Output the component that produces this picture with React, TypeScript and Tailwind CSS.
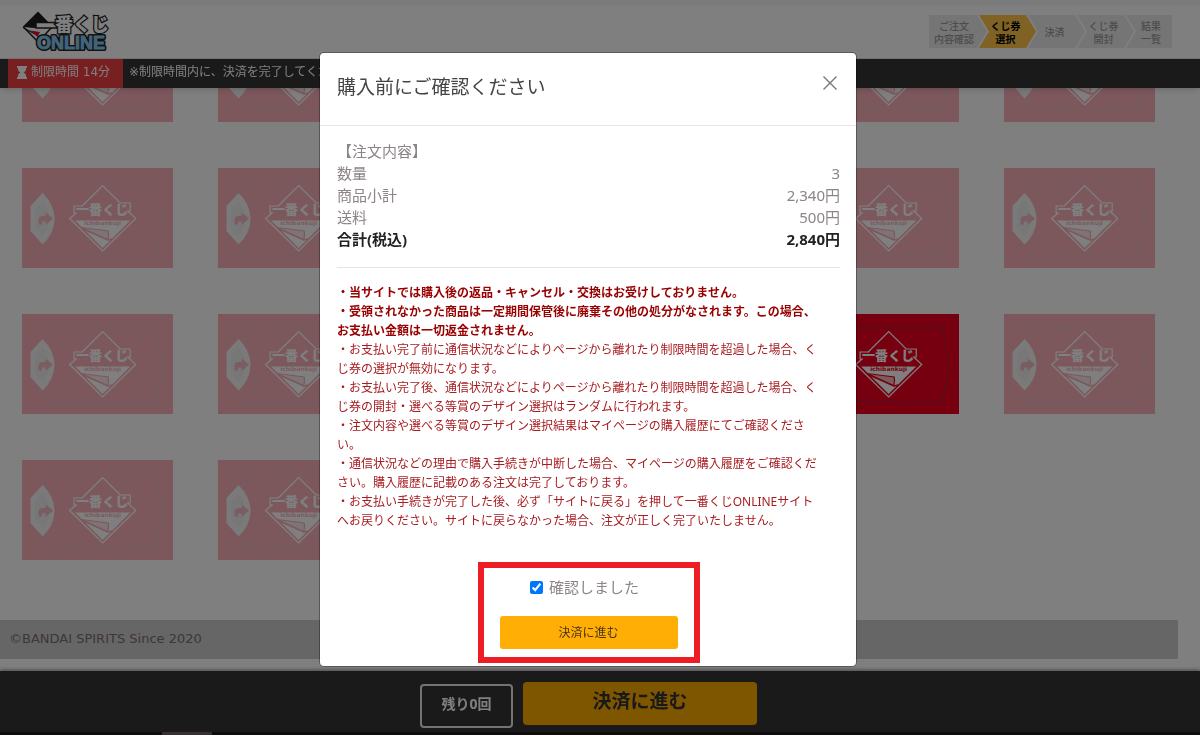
import { useState } from "react";

const UI = "font-['Noto_Sans','Noto_Sans_CJK_JP',sans-serif]";
const WIDE = "font-['DejaVu_Sans','Noto_Sans_CJK_JP',sans-serif]";

const steps = [
  { lines: ["ご注文", "内容確認"], width: "w-[58px]", active: false },
  { lines: ["くじ券", "選択"], width: "w-[57px] -ml-2", active: true },
  { lines: ["決済"], width: "w-[57px] -ml-2", active: false },
  { lines: ["くじ券", "開封"], width: "w-[57px] -ml-2", active: false },
  { lines: ["結果", "一覧"], width: "w-[46px] -ml-2", active: false },
];

const clips = {
  first: "[clip-path:polygon(0_0,calc(100%_-_10px)_0,100%_50%,calc(100%_-_10px)_100%,0_100%)]",
  middle: "[clip-path:polygon(0_0,calc(100%_-_10px)_0,100%_50%,calc(100%_-_10px)_100%,0_100%,10px_50%)]",
  last: "[clip-path:polygon(0_0,100%_0,100%_100%,0_100%,10px_50%)]",
};

const order = [
  ["数量", "3"],
  ["商品小計", "2,340円"],
  ["送料", "500円"],
];

const warnings = [
  ["・当サイトでは購入後の返品・キャンセル・交換はお受けしておりません。"],
  [
    "・受領されなかった商品は一定期間保管後に廃棄その他の処分がなされます。この場合、",
    "お支払い金額は一切返金されません。",
  ],
];

const notes = [
  [
    "・お支払い完了前に通信状況などによりページから離れたり制限時間を超過した場合、く",
    "じ券の選択が無効になります。",
  ],
  [
    "・お支払い完了後、通信状況などによりページから離れたり制限時間を超過した場合、く",
    "じ券の開封・選べる等賞のデザイン選択はランダムに行われます。",
  ],
  ["・注文内容や選べる等賞のデザイン選択結果はマイページの購入履歴にてご確認くださ", "い。"],
  [
    "・通信状況などの理由で購入手続きが中断した場合、マイページの購入履歴をご確認くだ",
    "さい。購入履歴に記載のある注文は完了しております。",
  ],
  [
    "・お支払い手続きが完了した後、必ず「サイトに戻る」を押して一番くじONLINEサイト",
    "へお戻りください。サイトに戻らなかった場合、注文が正しく完了いたしません。",
  ],
];

const TICKETS = 20;

function Lines({ lines }: { lines: string[] }) {
  return (
    <p>
      {lines.map((line) => (
        <span key={line} className="block whitespace-nowrap">
          {line}
        </span>
      ))}
    </p>
  );
}

function Logo() {
  return (
    <svg viewBox="0 0 90 42" className="h-[42px] w-[90px]" role="img" aria-label="一番くじONLINE">
      <path d="M1.500 16 16 1.500 30 16 16 31Z" fill="#fff" stroke="#222" strokeWidth="1.500" strokeLinejoin="round" />
      <path d="M1.500 16 16 1.500 30 15.500 12 17Z" fill="#1c1c1c" />
      <path d="M1.500 17 15 24" stroke="#222" strokeWidth="1.200" />
      <path d="M8 19.500l10 1.500-2.500 5Z" fill="#d8103a" />
      <rect x="14" y="11.500" width="21" height="5.500" fill="#fff" stroke="#222" strokeWidth="1.500" />
      <text
        x="33"
        y="20"
        fontSize="18"
        fontWeight="900"
        fontFamily="'Noto Sans CJK JP', sans-serif"
        fill="#fff"
        stroke="#222"
        strokeWidth="2.500"
        strokeLinejoin="miter"
        paintOrder="stroke"
      >
        番くじ
      </text>
      <text
        x="15"
        y="38"
        fontSize="18"
        fontWeight="700"
        fontFamily="'Liberation Sans', Arial, sans-serif"
        fill="#86c8ec"
        stroke="#222"
        strokeWidth="4"
        strokeLinejoin="round"
        paintOrder="stroke"
      >
        ONLINE
      </text>
      <text
        x="15"
        y="38"
        fontSize="18"
        fontWeight="700"
        fontFamily="'Liberation Sans', Arial, sans-serif"
        fill="#86c8ec"
        stroke="#86c8ec"
        strokeWidth="0.800"
        aria-hidden="true"
      >
        ONLINE
      </text>
    </svg>
  );
}

function TicketArt({ selected }: { selected: boolean }) {
  return (
    <svg viewBox="0 0 151 100" className="block h-full w-full" preserveAspectRatio="none" aria-hidden="true">
      <rect width="151" height="100" fill="#ec001e" />
      <path
        d="M24 14q4-2 8-1h20l5 2 5-2h15l5 2 5-2h14l5 2 5-2h22l3 1M24 86q4 3 8 2h20l5-2 5 2h15l5-2 5 2h14l5-2 5 2h22l3-1M25 13v14M25 75v12M134 13l4 23M139 38l2 12-2 14M138 66l-4 22"
        fill="none"
        stroke="#7d2c44"
        strokeWidth="1"
        opacity="0.7"
      />
      {!selected && (
        <g>
          <path d="M20.500 25Q32 36 32.500 51 32 66 20.500 76.500L8.500 63V38Z" fill="#dcdcdc" />
          <path d="M20.500 33Q27 42 27.500 51 27 60 20.500 68L13 59V42Z" fill="#c8c8c8" />
          <path d="M16.500 56.500v-4.500q0-4 4-4h3v-3.500l7.500 6-7.500 6.500v-3.500h-3.500v3Z" fill="#d8203c" />
        </g>
      )}
      <path
        d="M59.500 38.500 80.500 17.500 98 35h10v8h-2.500L113.500 50.500 80.500 83 47.500 50.500 54 45h-2V38h8"
        fill="none"
        stroke="#fff"
        strokeWidth="1.200"
      />
      <path d="M53 52.500h55L80.500 80Z" fill="#fff" />
      <text
        x="54"
        y="46"
        fontSize="13"
        fontWeight="900"
        fontFamily="'Noto Sans CJK JP', sans-serif"
        fill="#fff"
      >
        一番くじ
      </text>
      <text
        x="80.500"
        y="57"
        fontSize="6"
        fontWeight="700"
        textAnchor="middle"
        fontFamily="'DejaVu Sans', sans-serif"
        fill="#ec001e"
      >
        ichibankuji
      </text>
      <path d="M59 59.500 86 63q1 4-.500 9Z" fill="#f9b4bc" stroke="#ec001e" strokeWidth="1.200" />
      <path d="M60 60.500 86 72l4-1" fill="none" stroke="#ec001e" strokeWidth="1.500" />
    </svg>
  );
}

function Hourglass() {
  return (
    <svg viewBox="0 0 10 13" className="h-[13px] w-[10px] fill-white" aria-hidden="true">
      <path d="M0 0h10v2H9v1.500Q9 5.500 6.500 6.500 9 7.500 9 9.500V11h1v2H0v-2h1V9.500Q1 7.500 3.500 6.500 1 5.500 1 3.500V2H0Z" />
    </svg>
  );
}

export default function App() {
  const [confirmed, setConfirmed] = useState(true);

  return (
    <div className={`min-h-screen bg-white ${UI}`}>
      <header className="fixed inset-x-0 top-0 z-10">
        <div className="h-[5px] bg-[#f6f6f6]" />
        <div className="flex h-[54px] items-center justify-between border-b border-[#e4e4e4] bg-white pr-7 pl-[22px]">
          <Logo />
          <ol className="flex font-['Noto_Sans_CJK_JP',sans-serif] text-[10px] leading-[13px] font-medium">
            {steps.map((step, i) => (
              <li
                key={i}
                className={`flex h-[33px] flex-col items-center justify-center ${step.width} ${
                  i === 0 ? clips.first : i === steps.length - 1 ? clips.last : clips.middle
                } ${i === 0 ? "pr-2" : i === steps.length - 1 ? "pl-1" : "pr-1"} ${
                  step.active ? "bg-[#ffc548] font-bold text-black" : "bg-[#ebebeb] text-[#989898]"
                }`}
              >
                {step.lines.map((line) => (
                  <span key={line}>{line}</span>
                ))}
              </li>
            ))}
          </ol>
        </div>
        <div className={`flex h-[29px] items-stretch bg-[#353535] pl-2 text-[12px] text-white shadow-md ${WIDE}`}>
          <div className="flex w-[115px] items-center gap-1 bg-[#f03e42] pb-[3px] pl-[9px]">
            <Hourglass />
            <span className="whitespace-nowrap">制限時間 14分</span>
          </div>
          <p className="flex items-center pb-[3px] pl-[6px] whitespace-nowrap">
            ※制限時間内に、決済を完了してください。
          </p>
        </div>
      </header>

      <main className="-ml-px pt-[22px] pr-[22px] pb-[60px]">
        <div className="grid grid-cols-6 gap-y-[46px]">
          {Array.from({ length: TICKETS }, (_, i) => (
            <button
              key={i}
              type="button"
              aria-label={`くじ券 ${i + 1}`}
              className={`mx-auto h-[100px] w-[77%] ${i === 16 ? "" : "opacity-30"}`}
            >
              <TicketArt selected={i === 16} />
            </button>
          ))}
        </div>
      </main>

      <footer
        className={`mr-[22px] mb-[76px] flex h-[39px] items-center bg-[#cccccc] pb-[2px] pl-[9px] text-[13px] text-[#7c6c70] ${WIDE}`}
      >
        ©BANDAI SPIRITS Since 2020
      </footer>

      <div className="fixed inset-x-0 bottom-0 z-10 bg-[#353535] shadow-[0_-2px_3px_rgba(0,0,0,0.3)]">
        <div className="flex h-[61px] items-center justify-center gap-[10px] pt-1 pr-[23px]">
          <button
            type="button"
            className="mt-1 h-[44px] w-[93px] rounded border-2 border-[#e8e8e8] pb-1 text-[14px] font-bold text-white"
          >
            残り0回
          </button>
          <button
            type="button"
            className="h-[43px] w-[234px] rounded bg-[#ffac00] pb-1 text-[19px] font-semibold text-[#333333]"
          >
            決済に進む
          </button>
        </div>
        <div className="h-[3px] bg-[#1c161a] pl-[162px]">
          <div className="h-[3px] w-[50px] bg-[#6c6064]" />
        </div>
      </div>

      <div className="fixed inset-0 z-20 flex items-start justify-center bg-black/50 pt-[53px] pr-6">
        <section
          role="dialog"
          aria-modal="true"
          aria-labelledby="confirm-title"
          className="w-[536px] rounded bg-white text-[15px] leading-[22px] text-[#8c8486] ring-1 ring-black/30"
        >
          <div className="flex items-start justify-between border-b border-[#eae2e4] pt-5 pr-[19px] pb-6 pl-[17px]">
            <h2 id="confirm-title" className="text-[19px] leading-[28px] font-normal text-[#444444]">
              購入前にご確認ください
            </h2>
            <button type="button" aria-label="閉じる" className="mt-[3px]">
              <svg viewBox="0 0 14 14" className="size-[14px] fill-none stroke-[#777777]" strokeWidth="1.4">
                <path d="M.5.5l13 13M13.500.5l-13 13" />
              </svg>
            </button>
          </div>

          <div className="pt-[14px] pr-4 pb-[3px] pl-[17px]">
            <h3 className="font-normal">【注文内容】</h3>
            <dl>
              {order.map(([name, value]) => (
                <div key={name} className="flex justify-between">
                  <dt>{name}</dt>
                  <dd>{value}</dd>
                </div>
              ))}
              <div className="flex justify-between font-bold text-[#222222]">
                <dt>合計(税込)</dt>
                <dd>2,840円</dd>
              </div>
            </dl>

            <hr className="mt-[17px] border-[#eae2e4]" />

            <div className="mt-[15px] text-[12px] leading-[19px]">
              <div className="font-bold text-[#990000]">
                {warnings.map((lines) => (
                  <Lines key={lines[0]} lines={lines} />
                ))}
              </div>
              <div className="text-[#a81c20]">
                {notes.map((lines) => (
                  <Lines key={lines[0]} lines={lines} />
                ))}
              </div>
            </div>

            <div className="mx-auto mt-8 flex w-[222px] flex-col items-center border-[6px] border-[#ee1c24] py-2">
              <label className="flex items-center gap-[6px] pr-2">
                <input
                  type="checkbox"
                  checked={confirmed}
                  onChange={(e) => setConfirmed(e.target.checked)}
                  className="size-[13px]"
                />
                確認しました
              </label>
              <button
                type="button"
                disabled={!confirmed}
                className="mt-[18px] h-[33px] w-[178px] rounded-[3px] bg-[#ffae06] text-[12px] text-[#4a3510]"
              >
                決済に進む
              </button>
            </div>
          </div>
        </section>
      </div>
    </div>
  );
}
